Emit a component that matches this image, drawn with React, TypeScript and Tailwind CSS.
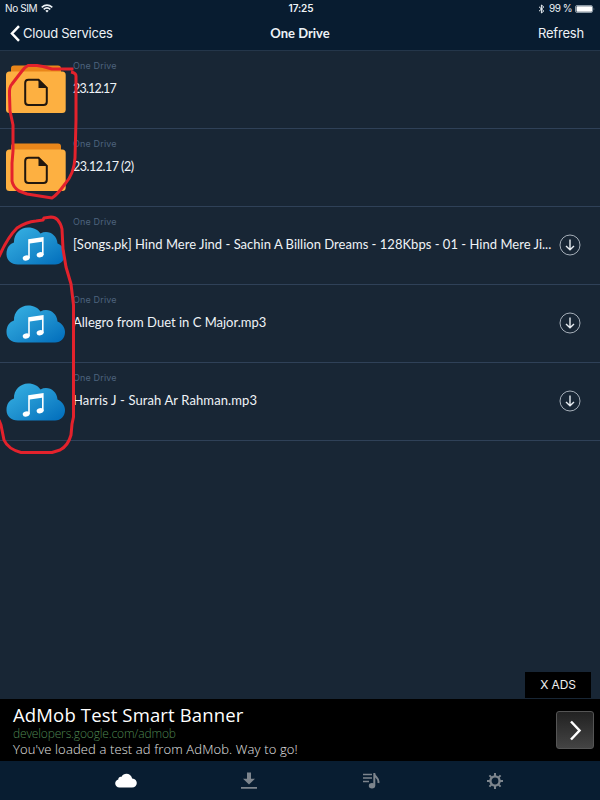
import React from "react";

type Item = { title: string; kind: "folder" | "song"; tracking: string };

const items: Item[] = [
  { title: "23.12.17", kind: "folder", tracking: "mt-[6px] text-[12.5px] tracking-[-0.8px]" },
  { title: "23.12.17 (2)", kind: "folder", tracking: "mt-[6px] text-[12.5px] tracking-[-0.5px]" },
  { title: "[Songs.pk] Hind Mere Jind - Sachin A Billion Dreams - 128Kbps - 01 - Hind Mere Ji...", kind: "song", tracking: "mt-[5px] text-[13px] tracking-[0.015px]" },
  { title: "Allegro from Duet in C Major.mp3", kind: "song", tracking: "mt-[5px] text-[13px] tracking-[0px]" },
  { title: "Harris J - Surah Ar Rahman.mp3", kind: "song", tracking: "mt-[5px] text-[13px] tracking-[0.1px]" },
];

function FolderIcon() {
  return (
    <svg width="60" height="50" viewBox="0 0 60 50">
      <path d="M5 10V4.500q0-3 3-3h44q3 0 3 3v5.500z" fill="#e9861a" />
      <rect x="0" y="7.500" width="59.700" height="41.500" rx="3.500" fill="#fdb041" />
      <path d="M32.500 15.800H22.500q-3.300 0-3.300 3.300v18.700q0 3.300 3.300 3.300h15q3.300 0 3.300-3.300V23.900z" fill="none" stroke="#21170e" strokeWidth="2" />
      <path d="M32.500 15.100v8.800h9z" fill="#21170e" />
    </svg>
  );
}

function CloudSongIcon() {
  return (
    <svg width="60" height="38" viewBox="0 0 60 38">
      <defs>
        <linearGradient id="cloud" x1="0" y1="0" x2="1" y2="1">
          <stop offset="0" stopColor="#39b4e5" />
          <stop offset="0.5" stopColor="#1f91cf" />
          <stop offset="1" stopColor="#006cbb" />
        </linearGradient>
      </defs>
      <path d="M12 37.500C5 37.500.5 33 .5 27C.5 21 3.500 17 8 15.500C7.500 7 14.500.5 22 .5C28 .5 32 3 34.500 6.500C42 2.500 51 7.500 51.500 16.500C56 18.500 59 22.500 59 27C59 33 55 37.500 49 37.500Z" fill="url(#cloud)" />
      <path d="M22.200 12.200L37.600 9.900V28H36V14.700L23.800 16.500V31H22.200Z" fill="#fff" />
      <ellipse cx="20.200" cy="31" rx="3.500" ry="2.600" transform="rotate(-12 20.200 31)" fill="#fff" />
      <ellipse cx="34.100" cy="27.800" rx="3.500" ry="2.600" transform="rotate(-12 34.100 27.800)" fill="#fff" />
    </svg>
  );
}

function DownloadCircle() {
  return (
    <svg width="22" height="22" viewBox="0 0 22 22" fill="none">
      <circle cx="11" cy="11" r="10" stroke="#a6afb9" strokeWidth="1" />
      <path d="M11 5.500V15.500M7 12L11 15.800L15 12" stroke="#e6ebf0" strokeWidth="1.400" />
    </svg>
  );
}

function Row({ item }: { item: Item }) {
  return (
    <li className="flex h-[78px] shrink-0 border-b border-[#2f4158]">
      <div className="w-[73px] shrink-0 pl-[6px]">
        <div className={item.kind === "folder" ? "pt-[13px]" : "pt-[20px]"}>
          {item.kind === "folder" ? <FolderIcon /> : <CloudSongIcon />}
        </div>
      </div>
      <div className="w-[487px] shrink-0 whitespace-nowrap">
        <div className="mt-[8px] h-[14px] font-['Inter',sans-serif] text-[9px] leading-[14px] tracking-[0.15px] text-[#4d637d]">One Drive</div>
        <div className={`h-[20px] font-['Lato',sans-serif] leading-[20px] text-[#eff3f7] ${item.tracking}`}>{item.title}</div>
      </div>
      {item.kind === "song" && (
        <div className="-ml-px pt-[27px]">
          <DownloadCircle />
        </div>
      )}
    </li>
  );
}

function Header() {
  return (
    <header className="h-[51px] shrink-0 border-b border-[#24364a] bg-[#081c30] font-['Inter',sans-serif] text-[#edf2f6]">
      <div className="grid h-[17px] grid-cols-3 items-center text-[10px] leading-[17px]">
        <div className="flex items-center gap-[4px] pl-[5px]">
          <span className="tracking-[-0.4px]">No SIM</span>
          <svg width="12" height="9" viewBox="0 0 12 9" fill="none" stroke="#edf2f6">
            <path d="M.7 3.300Q6-1.200 11.300 3.300M2.700 5.300Q6 2.600 9.300 5.300" strokeWidth="1.600" />
            <path d="M4.300 6.700Q6 5.400 7.700 6.700L6 8.500Z" fill="#edf2f6" stroke="none" />
          </svg>
        </div>
        <div className="pl-[2px] text-center font-semibold tracking-[-0.1px]">17:25</div>
        <div className="flex items-center justify-end pr-[5px]">
          <svg width="7" height="10" viewBox="0 0 7 10" fill="none" stroke="#edf2f6" strokeWidth="1"><path d="M1 2.800L5.800 7L3.400 9V1L5.800 3L1 7.200" /></svg>
          <span className="ml-[4px] mr-[3px] tracking-[-0.5px]">99 %</span>
          <svg width="20" height="8" viewBox="0 0 20 8">
            <rect x=".5" y=".5" width="17" height="7" rx="1.500" fill="none" stroke="#8997a3" />
            <rect x="1.500" y="1.200" width="15.500" height="5.600" rx=".8" fill="#fff" />
            <path d="M18.700 2.500Q20 4 18.700 5.500Z" fill="#8997a3" />
          </svg>
        </div>
      </div>
      <div className="grid h-[33px] grid-cols-3 items-center text-[13px] leading-[33px]">
        <div className="flex items-center pl-[10px]">
          <svg width="11" height="17" viewBox="0 0 11 17" fill="none"><path d="M9 1.200L2 8.500L9 15.800" stroke="#fff" strokeWidth="2.500" /></svg>
          <span className="ml-[2px] tracking-[-0.25px]">Cloud Services</span>
        </div>
        <h1 className="text-center font-['Lato',sans-serif] text-[13px] font-bold leading-[31px]">One Drive</h1>
        <div className="pr-[16px] text-right tracking-[-0.2px]">Refresh</div>
      </div>
    </header>
  );
}

function AdBanner() {
  return (
    <section className="flex h-[62px] shrink-0 items-center justify-between bg-black pl-[13px] pr-[6px] font-['Open_Sans',sans-serif]">
      <div className="whitespace-nowrap">
        <div className="h-[27px] text-[18.5px] leading-[27px] tracking-[0.15px] text-white">AdMob Test Smart Banner</div>
        <div className="h-[14px] text-[12px] font-light leading-[11px] tracking-[-0.15px] text-[#4e8652]">developers.google.com/admob</div>
        <div className="h-[18px] text-[13px] font-light leading-[14px] tracking-[0.13px] text-[#e4e4e4]">You've loaded a test ad from AdMob. Way to go!</div>
      </div>
      <button aria-label="Open ad" className="flex h-[38px] w-[38px] items-center justify-center rounded-[3px] border border-[#555] bg-linear-to-b from-[#222] to-[#444]">
        <svg width="14" height="21" viewBox="0 0 14 21" fill="none"><path d="M3 1.500L11.500 10.500L3 19.500" stroke="#fff" strokeWidth="2.500" /></svg>
      </button>
    </section>
  );
}

function TabBar() {
  return (
    <nav className="flex h-[39px] shrink-0 items-center bg-[#081d31] pl-[64px] text-[#7d858d]">
      <div className="flex w-[123px] shrink-0 justify-center">
        <svg width="22" height="15" viewBox="0 0 22 15"><path d="M4.500 14.500C2 14.500.2 12.800.2 10.500C.2 8.500 1.500 7 3.300 6.500C3.200 4.700 4.800 3.500 6.300 3.900C9 -.8 16 .1 17.200 5.500C20.300 5.800 21.800 7.800 21.800 10C21.800 12.700 19.800 14.500 17 14.500Z" fill="#fff" /></svg>
      </div>
      <div className="flex w-[123px] shrink-0 justify-center">
        <svg width="16" height="17" viewBox="0 0 16 17" fill="currentColor"><path d="M6 .5h4v6.200h4L8 12.500L2 6.700h4zM0 15h16v1.800H0z" /></svg>
      </div>
      <div className="flex w-[123px] shrink-0 justify-center">
        <svg width="17" height="17" viewBox="0 0 17 17" fill="none" stroke="currentColor"><path d="M0 2.500h9M0 6h9M0 9.500h6" strokeWidth="1.300" /><path d="M11.300 1v12.500M11.300 2c.7 3.200 5.400 4.500 4 9" strokeWidth="2" /><ellipse cx="9" cy="13.800" rx="3.200" ry="2.700" fill="currentColor" stroke="none" /></svg>
      </div>
      <div className="flex w-[123px] shrink-0 justify-center">
        <svg width="16" height="16" viewBox="0 0 16 16" fill="none" stroke="currentColor"><circle cx="8" cy="8" r="4.600" strokeWidth="2.400" /><path d="M8 0v3M8 13v3M0 8h3M13 8h3M2.400 2.400l2 2M11.600 11.600l2 2M13.600 2.400l-2 2M4.400 11.600l-2 2" strokeWidth="2" /></svg>
      </div>
    </nav>
  );
}

function MarkerLines() {
  return (
    <svg className="pointer-events-none absolute left-0 top-0" width="90" height="470" viewBox="0 0 90 470" fill="none" stroke="#e3222c" strokeWidth="3" strokeLinejoin="round">
      <path d="M73.500 69H52L43 66.500L37 65.500H28Q25 67 22 71L12 84Q9 87 9.500 95L10 111L13 125V151L12 163V181Q13 187 19 191L27 194L52 198Q57 195 65 184Q74 174 75 158L76 120V76Q76 73 71 72" />
      <path d="M-1 257Q7 238 17 228Q26 222 36 221L43 220L44 218L51 217Q59 217 62 229L63 249L66 267L71 284L73.500 305V402V417L72 424L71 435Q68 446 60 450L52 452.500H21Q8 449 4 440L1 425L-1 420" />
    </svg>
  );
}

export default function App() {
  return (
    <div className="relative flex h-[800px] w-[600px] flex-col overflow-hidden bg-[#182635]">
      <Header />
      <main className="flex min-h-0 flex-1 flex-col">
        <ul>{items.map((item) => <Row key={item.title} item={item} />)}</ul>
        <div className="mb-px mr-[9px] mt-auto flex h-[26px] w-[66px] items-center justify-center self-end bg-black font-['Inter',sans-serif] text-[12px] tracking-[-0.1px] text-[#eee]">X ADS</div>
      </main>
      <AdBanner />
      <TabBar />
      <MarkerLines />
    </div>
  );
}
